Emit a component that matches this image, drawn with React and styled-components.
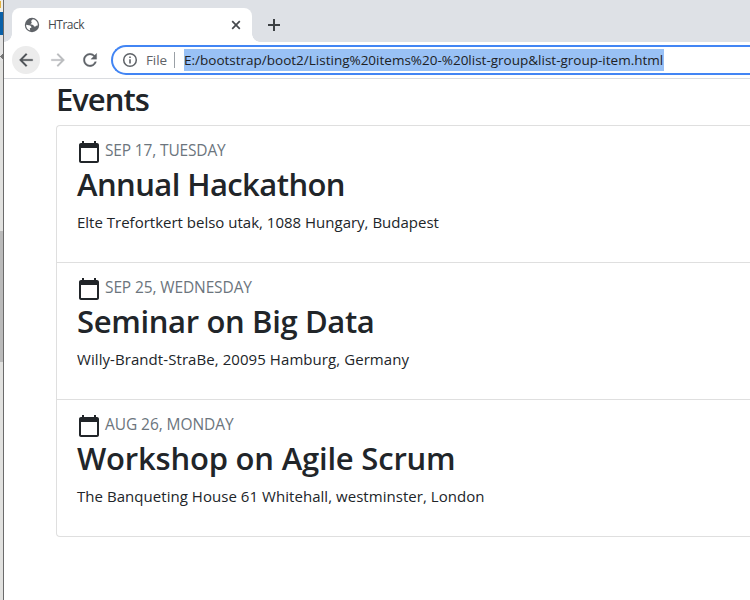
import React from "react";
import styled, { createGlobalStyle } from "styled-components";

const GlobalStyle = createGlobalStyle`
  * { box-sizing: border-box; }
  body { margin: 0; overflow: hidden; background: #fff; font-family: "Open Sans", "Noto Sans", sans-serif; color: #212529; }
  svg { display: block; flex: none; }
`;

const Screen = styled.div`
  display: flex;
  width: 750px;
  height: 600px;
  overflow: hidden;
`;
const Behind = styled.div`
  display: flex;
  flex-direction: column;
  flex: none;
  width: 4px;
  border-right: 1px solid #6b6b6b;
`;
const Slice = styled.div`
  flex: none;
  height: ${(p) => p.$h}px;
  background: ${(p) => p.$color};
`;
const Browser = styled.div`
  flex: 1;
  min-width: 0;
  display: flex;
  flex-direction: column;
  background: #fff;
`;
const TabStrip = styled.div`
  flex: none;
  display: flex;
  align-items: flex-end;
  height: 42px;
  background: #dee1e6;
`;
const TabFoot = styled.div`
  width: 8px;
  height: 8px;
  background: radial-gradient(circle at ${(p) => p.$corner}, transparent 7.5px, #fff 8px);
`;
const Tab = styled.div`
  display: flex;
  align-items: center;
  width: 240px;
  height: 34px;
  padding: 0 10px 0 12px;
  border-radius: 8px 8px 0 0;
  background: #fff;
`;
const TabTitle = styled.span`
  flex: 1;
  margin-left: 8px;
  font-size: 12px;
  line-height: 16px;
  letter-spacing: -0.5px;
  color: #45494d;
`;
const NewTab = styled.div`
  height: 34px;
  margin-left: 7px;
  display: flex;
  align-items: center;
`;
const Toolbar = styled.div`
  flex: none;
  display: flex;
  align-items: center;
  height: 37px;
  padding-left: 8px;
  border-bottom: 1px solid #dadce0;
`;
const NavButton = styled.div`
  display: grid;
  place-items: center;
  width: 28px;
  height: 28px;
  margin-right: 4px;
  border-radius: 50%;
  background: ${(p) => (p.$active ? "#ececec" : "transparent")};
`;
const Omnibox = styled.div`
  flex: 1;
  display: flex;
  align-items: center;
  height: 30px;
  margin-left: 3px;
  padding-left: 9px;
  border: 2px solid #4285f4;
  border-right: 0;
  border-radius: 15px 0 0 15px;
  font-size: 13.5px;
  line-height: 22px;
  white-space: nowrap;
`;
const Scheme = styled.span`
  width: 28px;
  margin-left: 8px;
  color: #5f6368;
  letter-spacing: -0.1px;
`;
const Divider = styled.span`
  width: 1px;
  height: 16px;
  margin-right: 9px;
  background: #9aa0a6;
`;
const Address = styled.span`
  width: 480px;
  height: 22px;
  background: #99c1f5;
  color: #202124;
`;
const Page = styled.main`
  padding: 1px 0 0 52px;
`;
const Heading = styled.h2`
  margin: 0;
  font-size: 31px;
  font-weight: 600;
  line-height: 38px;
  letter-spacing: ${(p) => p.$track}px;
  white-space: nowrap;
`;
const EventList = styled.ul`
  margin: 7px 0 0;
  padding: 0;
  list-style: none;
  border: 1px solid #dfdfdf;
  border-right: 0;
  border-radius: 4px 0 0 4px;
`;
const EventItem = styled.li`
  height: 137px;
  padding: 12px 20px;
  border-bottom: 1px solid #dfdfdf;
  &:last-child { height: 136px; padding-bottom: 0; border-bottom: 0; }
`;
const DateRow = styled.div`
  display: flex;
  align-items: flex-start;
  height: 27px;
  padding-top: 2px;
`;
const DateText = styled.span`
  margin: -1px 0 0 4px;
  font-size: 15.5px;
  line-height: 22px;
  letter-spacing: ${(p) => p.$track}px;
  color: #6c757d;
  white-space: nowrap;
`;
const Place = styled.p`
  margin: 7px 0 0;
  font-size: 15px;
  line-height: 24px;
  letter-spacing: ${(p) => p.$track}px;
  white-space: nowrap;
`;

const Calendar = () => (
  <svg width="24" height="24" viewBox="0 0 24 24" fill="#212529">
    <path d="M20 3h-1V1h-2v2H7V1H5v2H4c-1.100 0-2 .9-2 2v16c0 1.100.9 2 2 2h16c1.100 0 2-.9 2-2V5c0-1.100-.9-2-2-2zm0 18H4V8h16v13z" />
  </svg>
);
const Globe = () => (
  <svg width="16" height="16" viewBox="0 0 16 16">
    <circle cx="8" cy="8" r="7.200" fill="#5f6368" />
    <path d="M9 2.300 C7.500 3 6.800 4 7.500 5.200 C8.600 6.200 6.700 6.300 6.500 7.500 C8.600 7.500 9.800 8 10 9.600 L11.500 9.600 C12 8.700 12.800 8.400 13.800 8.600 C14 5.500 12.200 2.900 9 2.300Z M2.100 7.800 L4.800 8.200 C6.800 8.500 7.800 9.400 7.300 10.800 L5.800 11.200 L6.200 13.600 C3.600 12.900 2 10.700 2.100 7.800Z" fill="#fff" />
  </svg>
);
const Arrow = ({ color, flip }) => (
  <svg width="20" height="20" viewBox="0 0 24 24" fill={color} stroke={color} strokeWidth="0.300">
    <path
      transform={flip ? "matrix(-1 0 0 1 24 0)" : undefined}
      d="M20 11H7.830l5.590-5.590L12 4l-8 8 8 8 1.410-1.410L7.830 13H20v-2z"
    />
  </svg>
);
const Reload = () => (
  <svg width="20" height="20" viewBox="0 0 24 24" fill="#5f6368" stroke="#5f6368" strokeWidth="0.300">
    <path d="M17.650 6.350C16.200 4.900 14.210 4 12 4c-4.420 0-7.990 3.580-7.990 8s3.570 8 7.990 8c3.730 0 6.840-2.550 7.730-6h-2.080c-.82 2.330-3.040 4-5.650 4-3.310 0-6-2.690-6-6s2.690-6 6-6c1.660 0 3.140.69 4.220 1.780L13 11h7V4l-2.350 2.350z" />
  </svg>
);
const Info = () => (
  <svg width="16" height="16" viewBox="0 0 16 16">
    <circle cx="8" cy="8" r="6.300" fill="none" stroke="#5f6368" strokeWidth="1.500" />
    <path d="M7.200 4.500h1.600v1.600H7.200z M7.200 7.200h1.600v4.300H7.200z" fill="#5f6368" />
  </svg>
);
const Close = () => (
  <svg width="12" height="12" viewBox="0 0 12 12" stroke="#45494d" strokeWidth="1.700">
    <path d="M2.200 2.200l7.600 7.600M9.800 2.200l-7.600 7.600" />
  </svg>
);
const Plus = () => (
  <svg width="14" height="14" viewBox="0 0 14 14" fill="#3c4043">
    <path d="M6 1h2v5h5v2H8v5H6V8H1V6h5z" />
  </svg>
);

const events = [
  { date: "SEP 17, TUESDAY", dateTrack: -0.15, title: "Annual Hackathon", titleTrack: -0.58, place: "Elte Trefortkert belso utak, 1088 Hungary, Budapest", placeTrack: 0 },
  { date: "SEP 25, WEDNESDAY", dateTrack: -0.12, title: "Seminar on Big Data", titleTrack: -0.35, place: "Willy-Brandt-StraBe, 20095 Hamburg, Germany", placeTrack: 0.07 },
  { date: "AUG 26, MONDAY", dateTrack: -0.07, title: "Workshop on Agile Scrum", titleTrack: -0.2, place: "The Banqueting House 61 Whitehall, westminster, London", placeTrack: 0.045 },
];

export default function App() {
  return (
    <Screen>
      <GlobalStyle />
      <Behind>
        <Slice $h={1} $color="#f0eee8" />
        <Slice $h={7} $color="linear-gradient(90deg, #e3b341 1px, #f0eee8 1px)" />
        <Slice $h={4} $color="#f0eee8" />
        <Slice $h={23} $color="#0860a8" />
        <Slice $h={16} $color="#e3e3e3" />
        <Slice $h={10} $color="conic-gradient(from 45deg at 0 50%, #777 90deg, #e3e3e3 90deg)" />
        <Slice $h={170} $color="#e1e1df" />
        <Slice $h={131} $color="#bababa" />
        <Slice $h={238} $color="#e1e1df" />
      </Behind>
      <Browser>
        <TabStrip>
          <TabFoot $corner="0 0" />
          <Tab>
            <Globe />
            <TabTitle>HTrack</TabTitle>
            <Close />
          </Tab>
          <TabFoot $corner="8px 0" />
          <NewTab><Plus /></NewTab>
        </TabStrip>
        <Toolbar>
          <NavButton $active><Arrow color="#4d5156" /></NavButton>
          <NavButton><Arrow color="#babcbe" flip /></NavButton>
          <NavButton><Reload /></NavButton>
          <Omnibox>
            <Info />
            <Scheme>File</Scheme>
            <Divider />
            <Address>E:/bootstrap/boot2/Listing%20items%20-%20list-group&amp;list-group-item.html</Address>
          </Omnibox>
        </Toolbar>
        <Page>
          <Heading $track={-1}>Events</Heading>
          <EventList>
            {events.map((e) => (
              <EventItem key={e.title}>
                <DateRow>
                  <Calendar />
                  <DateText $track={e.dateTrack}>{e.date}</DateText>
                </DateRow>
                <Heading $track={e.titleTrack}>{e.title}</Heading>
                <Place $track={e.placeTrack}>{e.place}</Place>
              </EventItem>
            ))}
          </EventList>
        </Page>
      </Browser>
    </Screen>
  );
}
